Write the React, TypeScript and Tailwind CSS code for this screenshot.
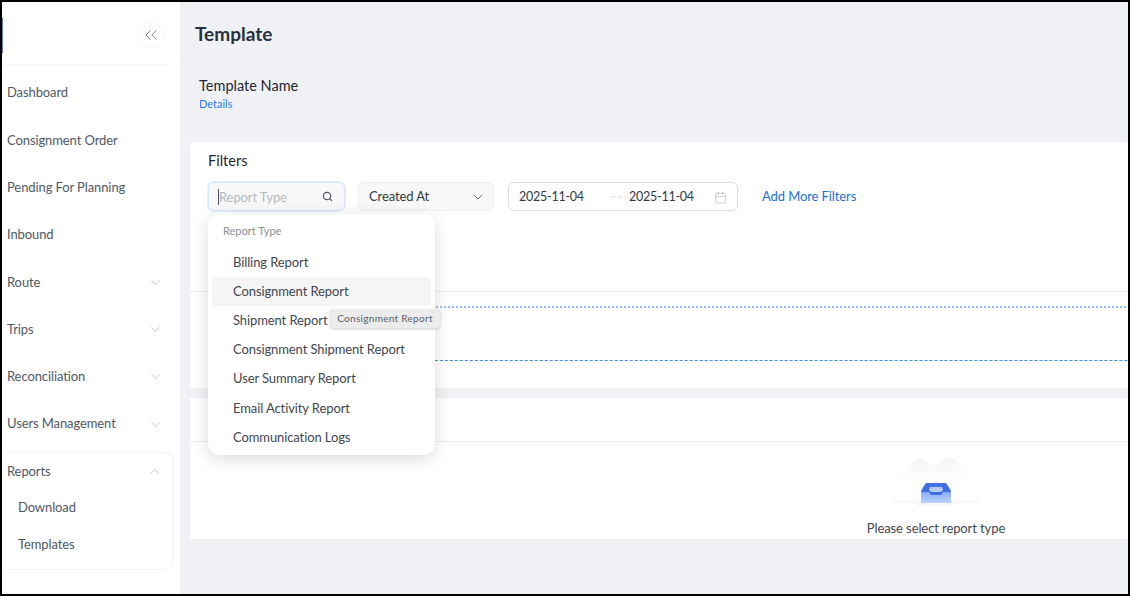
import { ChevronDown, ChevronUp, ChevronsLeft, Search, Calendar, MoveRight } from "lucide-react";

const navItems = [
  { label: "Dashboard" },
  { label: "Consignment Order" },
  { label: "Pending For Planning" },
  { label: "Inbound" },
  { label: "Route", arrow: true },
  { label: "Trips", arrow: true },
  { label: "Reconciliation", arrow: true },
  { label: "Users Management", arrow: true },
];

const reportTypes = [
  "Billing Report",
  "Consignment Report",
  "Shipment Report",
  "Consignment Shipment Report",
  "User Summary Report",
  "Email Activity Report",
  "Communication Logs",
];

function Sidebar() {
  return (
    <aside className="flex h-full w-[178px] shrink-0 flex-col bg-white">
      <div className="relative mr-[12px] flex h-[63px] shrink-0 items-center justify-end border-b border-[#f4f4f5] pr-[5px]">
        <div className="absolute left-0 top-[16px] h-[35px] w-px bg-[#5b7fa8]" />
        <button className="mt-[3px] flex h-[24px] w-[24px] items-center justify-center rounded-full bg-white shadow-[0_0_3px_rgba(220,200,190,0.25)]">
          <ChevronsLeft size={20} strokeWidth={1} className="text-[#5b6470]" />
        </button>
      </div>
      <nav className="mt-[4.5px] flex flex-col">
        {navItems.map((item) => (
          <div key={item.label} className="flex h-[47.3px] items-center justify-between pl-[5px] pr-[17px] text-[13px] tracking-[-0.1px] text-[#4f5866]">
            <span>{item.label}</span>
            {item.arrow && <ChevronDown size={15} strokeWidth={1.1} className="text-[#a3a9b3]" />}
          </div>
        ))}
      </nav>
      <div className="mr-[6px] mt-[4.5px] rounded-r-lg rounded-l-none border border-l-0 border-[#f4f4f5] pb-[6px] text-[13px] tracking-[-0.1px] text-[#4f5866]">
        <div className="flex h-[36px] items-center justify-between pl-[5px] pr-[11px]">
          <span>Reports</span>
          <ChevronUp size={15} strokeWidth={1.1} className="text-[#a3a9b3]" />
        </div>
        <div className="flex h-[37px] items-center pl-[16px]">Download</div>
        <div className="flex h-[37px] items-center pl-[16px]">Templates</div>
      </div>
    </aside>
  );
}

function ReportTypeFilter() {
  return (
    <div className="relative">
      <div className="flex h-[29px] w-[137px] items-center justify-between rounded-md border border-[#d6e6fb] bg-[#f8f8f8] pl-[9px] pr-[11px] shadow-[0_0_0_1px_#e6f0fd]">
        <span className="border-l border-[#4b5563] text-[13px] leading-[16px] tracking-[-0.1px] text-[#b4b8be]">Report Type</span>
        <Search size={11} strokeWidth={2.6} className="text-[#555b63]" />
      </div>
      <div className="absolute left-0 top-[32px] z-10 h-[241px] w-[227px] rounded-xl bg-white px-[4px] shadow-[0_4px_18px_rgba(0,0,0,0.14)]">
        <div className="flex h-[34px] items-center pl-[11px] text-[11px] text-[#8a8f96]">Report Type</div>
        <div className="flex flex-col">
          {reportTypes.map((name) => (
            <div
              key={name}
              className={`flex h-[29.15px] items-center rounded pl-[21px] text-[13px] tracking-[-0.1px] text-[#3f4650] ${name === "Consignment Report" ? "bg-[#f5f5f5]" : ""}`}
            >
              {name}
            </div>
          ))}
        </div>
      </div>
      <div className="absolute left-[122px] top-[127px] z-20 flex h-[19px] w-[110px] items-center justify-center rounded-sm bg-[#ececec] text-[10px] tracking-[0.3px] text-[#5b6067] shadow-[0_1px_3px_rgba(0,0,0,0.2)]">
        Consignment Report
      </div>
    </div>
  );
}

function EmptyBox() {
  return (
    <svg width="92" height="58" viewBox="0 0 92 58" fill="none">
      <defs>
        <linearGradient id="tray" x1="0" y1="0" x2="0" y2="1">
          <stop offset="0" stopColor="#5f90f2" />
          <stop offset="1" stopColor="#bcd1fb" />
        </linearGradient>
        <linearGradient id="cloud" x1="0" y1="0" x2="0" y2="1">
          <stop offset="0" stopColor="#f5f5f5" />
          <stop offset="1" stopColor="#fdfdfd" />
        </linearGradient>
      </defs>
      <path
        d="M7 24c2-4 6-6 10-7 1-4 3-10 8-12 3-2 6-3 9-1 3 1 4 4 8 5 3 0 6 0 8-1 2-4 6-7 11-6 5 0 7 4 8 9 2 3 7 5 9 9 2 2 4 3 6 4H7z"
        fill="url(#cloud)"
      />
      <rect x="3" y="44" width="87" height="3" fill="#f9f9f9" />
      <rect x="27" y="47" width="37" height="3" fill="#f8f8f8" />
      <path d="M31 47V34l5-7h20l5 7v13z" fill="url(#tray)" />
      <path d="M31 36l5-9h20l5 9H53l-2 3H41l-2-3z" fill="#3f6fe0" />
      <path d="M40 31h12l1 3-2 2H41l-2-2z" fill="#b6cdf8" />
    </svg>
  );
}

export default function App() {
  return (
    <div className="h-[596px] w-[1130px] overflow-hidden bg-black p-[2px] font-['Lato','Open_Sans',sans-serif]">
      <div className="flex h-full w-full overflow-hidden bg-[#f0f1f5]">
        <Sidebar />
        <main className="flex min-w-0 flex-1 flex-col">
          <header className="flex h-[62px] shrink-0 items-center border-b border-[#ebecef] pl-[15px] pt-[4px] text-[19px] font-bold text-[#27303f]">
            Template
          </header>
          <div className="h-[78px] shrink-0 pl-[19px] pt-[12px]">
            <div className="text-[14.5px] leading-[20px] text-[#1f2733]">Template Name</div>
            <div className="text-[11px] leading-[16px] text-[#2f7bf0]">Details</div>
          </div>
          <section className="ml-[10px] h-[246px] w-[1492px] shrink-0 rounded-tl bg-white">
            <div className="px-[18px] pt-[9px]">
              <div className="text-[14.5px] leading-[19px] text-[#1f2733]">Filters</div>
              <div className="mt-[12px] flex items-center">
                <ReportTypeFilter />
                <div className="ml-[13px] flex h-[29px] w-[136px] items-center justify-between rounded-md border border-[#f0f0f0] bg-[#f8f8f8] pl-[10px] pr-[7px] text-[13px] tracking-[-0.1px] text-[#333a44]">
                  Created At
                  <ChevronDown size={16} strokeWidth={1.2} className="text-[#4b5563]" />
                </div>
                <div className="ml-[14px] flex h-[29px] w-[230px] items-center whitespace-nowrap rounded-md border border-[#dcdcdc] bg-white pl-[10px] pr-[10px] pt-px text-[12.5px] tracking-[-0.25px] text-[#333a44]">
                  <span className="w-[64px]">2025-11-04</span>
                  <MoveRight size={14} strokeWidth={1} className="ml-[26px] text-[#cfcfcf]" />
                  <span className="ml-[6px] w-[64px]">2025-11-04</span>
                  <Calendar size={13} strokeWidth={1} className="ml-auto text-[#a8a8a8]" />
                </div>
                <span className="ml-[24px] text-[13px] tracking-[-0.1px] text-[#1a6fd8]">Add More Filters</span>
              </div>
            </div>
            <div className="mt-[80px] h-px bg-[#ececec]" />
            <div className="ml-[30px] mt-[14px] h-[55px] border-b border-t-2 border-b-[#3d8bea] border-t-[#93bdf0] [border-bottom-style:dashed] [border-top-style:dotted]" />
          </section>
          <section className="ml-[10px] mt-[10px] h-[141px] w-[1492px] shrink-0 bg-white">
            <div className="h-[44px] border-b border-[#ececec]" />
            <div className="flex flex-col items-center pt-[14px]">
              <EmptyBox />
              <div className="mt-[5px] text-[13px] leading-[18px] tracking-[-0.1px] text-[#3f4650]">Please select report type</div>
            </div>
          </section>
        </main>
      </div>
    </div>
  );
}
